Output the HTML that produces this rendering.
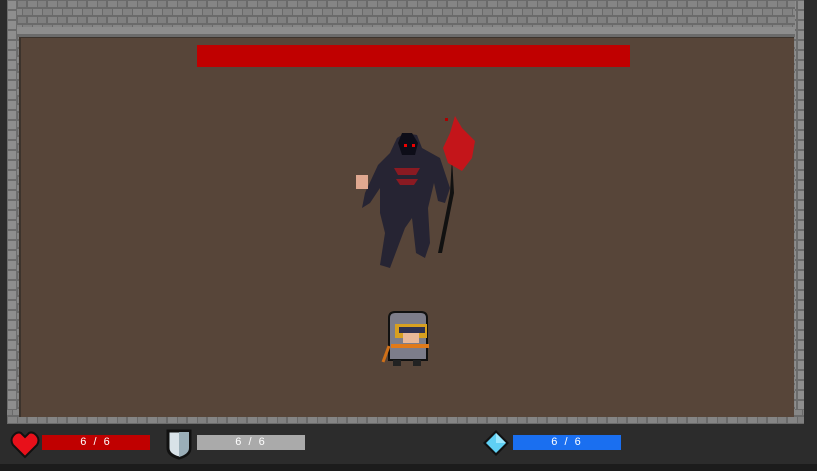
<!DOCTYPE html>
<html><head><style>
*{margin:0;padding:0;box-sizing:border-box}
body{width:817px;height:471px;background:#2c2c2c;position:relative;overflow:hidden;font-family:"Liberation Sans",sans-serif}
.a{position:absolute}
.bar{position:absolute;height:15px;color:#fff;font-size:11px;text-align:center;line-height:15px;letter-spacing:2px}
</style></head><body>
<div class="a" style="left:0;top:464px;width:817px;height:7px;background:#1c1c1c"></div>
<svg class="a" style="left:7px;top:0" width="797" height="424">
<defs>
<pattern id="b" width="20" height="16" patternUnits="userSpaceOnUse">
<rect width="20" height="16" fill="#6a6a6a"/>
<rect x="1" y="1" width="9" height="6" fill="#858585"/><rect x="11" y="1" width="8" height="6" fill="#808080"/>
<rect x="-4" y="9" width="9" height="6" fill="#828282"/><rect x="6" y="9" width="9" height="6" fill="#878787"/><rect x="16" y="9" width="9" height="6" fill="#828282"/>
</pattern>
<pattern id="p" width="10" height="10" patternUnits="userSpaceOnUse">
<rect width="10" height="10" fill="#6c6c6c"/><rect x="1" y="1" width="8" height="8" fill="#8e8e8e"/>
</pattern>
</defs>
<rect width="797" height="424" fill="url(#b)"/>
<rect x="0" y="0" width="10" height="424" fill="url(#p)"/>
<rect x="788" y="0" width="9" height="424" fill="url(#p)"/>
<rect x="0" y="410" width="797" height="14" fill="url(#b)"/>
</svg>
<div class="a" style="left:17px;top:27px;width:778px;height:10px;background:#8d8d8d;border-bottom:3px solid #6b6b6b"></div>
<div class="a" style="left:19px;top:37px;width:775px;height:380px;background:#574539;border-left:2px solid #3c332c;border-top:1px solid #3c332c"></div>
<div class="a" style="left:197px;top:45px;width:433px;height:22px;background:#c00000"></div>
<svg class="a" style="left:350px;top:113px" width="130" height="160" viewBox="0 0 130 160">
<path d="M47 25 L55 20 L67 22 L72 35 L90 45 L100 75 L95 90 L88 88 L84 70 L78 95 L80 130 L75 145 L66 140 L62 105 L55 115 L40 155 L30 152 L35 120 L30 100 L30 75 L20 90 L12 95 L15 80 L28 52 L40 40 Z" fill="#262433"/>
<path d="M52 20 L62 20 L68 30 L65 42 L52 42 L48 30Z" fill="#0d0d18"/>
<rect x="54" y="31" width="3" height="3" fill="#e00"/><rect x="62" y="31" width="3" height="3" fill="#e00"/>
<path d="M44 55 L70 55 L66 62 L48 62Z M46 66 L68 66 L64 72 L50 72Z" fill="#8a1a22"/>
<rect x="6" y="62" width="12" height="14" fill="#e0a890"/>
<path d="M102 45 L104 80 L92 140 L88 140 L100 80 Z" fill="#111"/>
<path d="M105 3 L112 15 L125 28 L122 45 L112 58 L98 50 L93 35 L100 20 Z" fill="#c4151a"/>
<rect x="95" y="5" width="3" height="3" fill="#a00"/>
</svg>
<svg class="a" style="left:381px;top:310px" width="52" height="60" viewBox="0 0 52 60">
<path d="M8 8 Q8 2 14 2 L40 2 Q46 2 46 8 L46 50 L8 50Z" fill="#7d7d8a" stroke="#111" stroke-width="2"/>
<rect x="14" y="14" width="32" height="14" fill="#d8a020"/>
<rect x="18" y="17" width="26" height="6" fill="#2d3050"/>
<rect x="22" y="23" width="16" height="10" fill="#e8b898"/>
<rect x="10" y="34" width="38" height="4" fill="#e07a1a"/>
<path d="M8 36 L2 52" stroke="#d07018" stroke-width="3"/>
<rect x="12" y="50" width="8" height="6" fill="#222"/><rect x="32" y="50" width="8" height="6" fill="#222"/>
</svg>
<svg class="a" style="left:10px;top:430px" width="30" height="30" viewBox="0 0 30 30">
<path d="M15 27 L3 15 Q0 10 3 6 Q7 1 11 3 L15 7 L19 3 Q23 1 27 6 Q30 10 27 15 Z" fill="#e8101a" stroke="#111" stroke-width="2"/>
</svg>
<div class="bar" style="left:42px;top:435px;width:108px;background:#c00000">6 / 6</div>
<svg class="a" style="left:165px;top:428px" width="28" height="32" viewBox="0 0 28 32">
<path d="M3 3 L25 3 L25 20 Q25 27 14 30 Q3 27 3 20 Z" fill="#d8e2e8" stroke="#111" stroke-width="3"/>
<path d="M14 4 L24 4 L24 20 Q24 26 14 29Z" fill="#9aaeb8"/>
</svg>
<div class="bar" style="left:197px;top:435px;width:108px;background:#aaaaaa">6 / 6</div>
<svg class="a" style="left:482px;top:429px" width="28" height="28" viewBox="0 0 28 28">
<path d="M14 1 L27 14 L14 27 L1 14Z" fill="#111"/>
<path d="M14 4 L24 14 L14 24 L4 14Z" fill="#5fd0f4"/>
<path d="M14 4 L24 14 L14 14Z" fill="#9ae8ff"/>
</svg>
<div class="bar" style="left:513px;top:435px;width:108px;background:#1a6ff0">6 / 6</div>
</body></html>
